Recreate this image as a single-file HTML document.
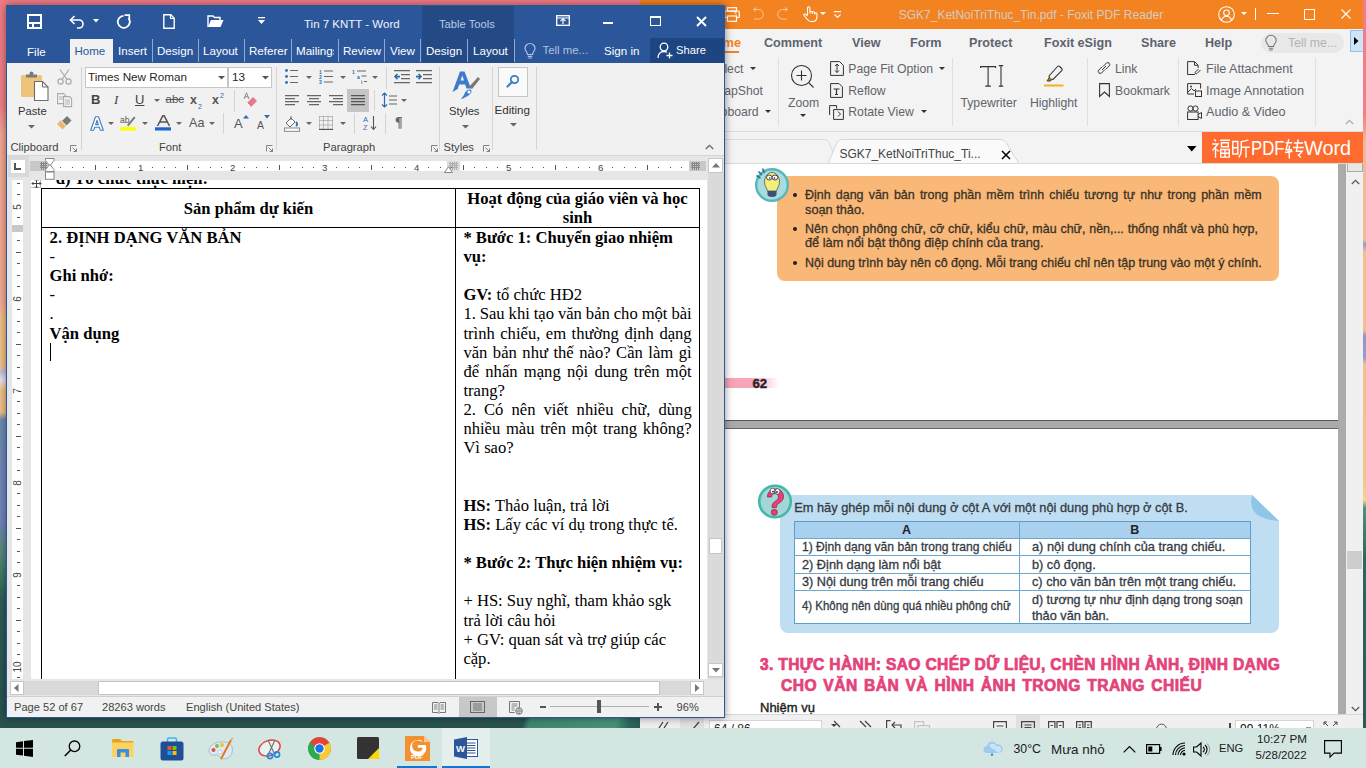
<!DOCTYPE html>
<html><head><meta charset="utf-8">
<style>
*{margin:0;padding:0;box-sizing:border-box}
html,body{width:1366px;height:768px;overflow:hidden;position:relative;font-family:"Liberation Sans",sans-serif}
.a{position:absolute}
svg{position:absolute;overflow:visible}
.t{position:absolute;white-space:nowrap;line-height:1}
/* wallpaper */
#wall{left:0;top:0;width:1366px;height:728px;background:linear-gradient(180deg,#f27c86 0px,#f07f86 105px,#f5a892 135px,#f6aa94 300px,#f2c08a 318px,#f2c388 365px,#c9c0dc 372px,#e8e4ee 380px,#f0c48a 390px,#efc088 412px,#6c8cb4 420px,#7484bc 520px,#5a8a80 550px,#3e7a68 575px,#2c5e56 600px,#28524e 728px)}
/* taskbar */
#task{left:0;top:728px;width:1366px;height:40px;background:#d3e6e2}
.tt{font-size:12px;color:#1a1a1a}
/* foxit */
#fox{left:640px;top:0;width:723px;height:728px;background:#f3f3f3;overflow:hidden}
.ftab{font-weight:bold;font-size:12.6px;color:#5d6370;margin-top:1px}
.frt{font-size:12.2px;color:#60646c}
/* word */
#word{left:6px;top:5px;width:719px;height:713px;background:#f1f1f1;box-shadow:0 0 8px rgba(0,0,0,.45);overflow:hidden}
.wtab{font-size:11.6px;color:#fff}
.sep{background:#d4d4d4;width:1px}
.doc{font-family:"Liberation Serif",serif;font-size:16.6px;color:#000;line-height:1}
</style></head><body>
<div id="wall" class="a"></div>
<div class="a" style="left:1360px;top:0;width:6px;height:728px;background:linear-gradient(180deg,#f27c88 0,#f07f88 115px,#f1b898 140px,#f2bc92 240px,#9a98cc 244px,#f0c08e 252px,#f0c08e 330px,#9494c8 336px,#9a9ad0 358px,#f0c08e 364px,#f2c490 480px,#f0d890 500px,#4e9080 508px,#3f7f70 530px,#2e6660 560px,#2a5a55 728px)"></div>

<div class="a" style="left:515px;top:716px;width:125px;height:12px;background:linear-gradient(110deg,rgba(0,0,0,0) 0,rgba(0,0,0,0) 10px,#3f876e 16px,#4a9178 80%,#2d6a5c 90%,#2a5a55 100%)"></div>
<!-- ============ FOXIT ============ -->
<div id="fox" class="a">
 <div class="a" style="left:0px;top:0;width:723px;height:29px;background:#f38221"></div>
 <!-- title icons -->
 <svg style="left:84.0px;top:7px" width="16" height="15" viewBox="0 0 16 15"><rect x="3.5" y=".7" width="9" height="3.5" fill="none" stroke="#fff" stroke-width="1.2"/><rect x=".7" y="4" width="14.6" height="6.5" rx="1" fill="none" stroke="#fff" stroke-width="1.2"/><rect x="3.5" y="9" width="9" height="5.3" fill="#f38221" stroke="#fff" stroke-width="1.2"/><path d="M10.5 6h2" stroke="#fff" stroke-width="1"/></svg>
 <svg style="left:111.0px;top:7px" width="13" height="14" viewBox="0 0 13 14"><path d="M3 2.5h4.5a4.8 4.8 0 0 1 0 9.6H3" fill="none" stroke="#f9c59a" stroke-width="1"/><path d="M5 .5L2.5 2.5 5 4.5" fill="none" stroke="#f9c59a" stroke-width="1"/></svg>
 <svg style="left:137.0px;top:7px" width="13" height="14" viewBox="0 0 13 14"><path d="M10 2.5H5.5a4.8 4.8 0 0 0 0 9.6H10" fill="none" stroke="#f9c59a" stroke-width="1"/><path d="M8 .5l2.5 2 -2.5 2" fill="none" stroke="#f9c59a" stroke-width="1"/></svg>
 <svg style="left:163.0px;top:6px" width="14" height="16" viewBox="0 0 14 16"><path d="M4.5 9V2a1.2 1.2 0 0 1 2.4 0v5.5M6.9 6.5a1.2 1.2 0 0 1 2.4 0V8M9.3 7a1.2 1.2 0 0 1 2.4 0v1.5M11.7 8a1.1 1.1 0 0 1 2.2 0v3c0 2.5-1.5 4.5-4.5 4.5H8c-2 0-3-1-4-2.5L1 9.5c-.5-1 .5-2 1.5-1.2L4.5 10" fill="none" stroke="#fff" stroke-width="1.1"/></svg>
 <svg style="left:180.0px;top:12px" width="6" height="4"><path d="M0 0h6L3 3z" fill="#fff"/></svg>
 <svg style="left:193.5px;top:11px" width="7" height="9"><rect x="0" y="0" width="7" height="1.2" fill="#fff"/><path d="M0 3.5h7M0 5.5h7" stroke="#fff" stroke-width="0"/><path d="M.5 3.5l3 3 3-3" fill="none" stroke="#fff" stroke-width="1.1"/><path d="M.5 6l3 3 3-3" fill="none" stroke="#fff" stroke-width="0"/></svg>
 <div class="t" style="left:258.7px;top:9px;font-size:12px;color:#d6cbc2">SGK7_KetNoiTriThuc_Tin.pdf - Foxit PDF Reader</div>
 <svg style="left:577.5px;top:5.5px" width="17" height="17" viewBox="0 0 17 17"><circle cx="8.5" cy="8.5" r="7.8" fill="none" stroke="#fff" stroke-width="1.1"/><circle cx="8.5" cy="6.8" r="2.8" fill="none" stroke="#fff" stroke-width="1.1"/><path d="M3.5 14c1-2.5 3-3.8 5-3.8s4 1.3 5 3.8" fill="none" stroke="#fff" stroke-width="1.1"/></svg>
 <svg style="left:601.0px;top:12px" width="6" height="4"><path d="M0 0h6L3 3z" fill="#fff"/></svg>
 <div class="a" style="left:614.5px;top:8px;width:1px;height:12px;background:#fff"></div>
 <div class="a" style="left:627.0px;top:13px;width:12px;height:1px;background:#fff"></div>
 <div class="a" style="left:664.0px;top:9px;width:10.5px;height:10.5px;border:1.1px solid #fff"></div>
 <svg style="left:701.0px;top:8.5px" width="10" height="10" viewBox="0 0 10 10"><path d="M.5.5l9 9M9.5.5l-9 9" stroke="#fff" stroke-width="1.1"/></svg>
 <!-- ribbon tabs -->
 <div class="a" style="left:0px;top:29px;width:723px;height:102.5px;background:#f3f3f3"></div>
 <div class="t ftab" style="left:66.0px;top:36px;color:#f38221">Home</div>
 <div class="a" style="left:63.0px;top:50.5px;width:36px;height:2.3px;background:#f38221"></div>
 <div class="t ftab" style="left:124.0px;top:36px">Comment</div>
 <div class="t ftab" style="left:212.0px;top:36px">View</div>
 <div class="t ftab" style="left:270.0px;top:36px">Form</div>
 <div class="t ftab" style="left:329.0px;top:36px">Protect</div>
 <div class="t ftab" style="left:404.0px;top:36px">Foxit eSign</div>
 <div class="t ftab" style="left:501.0px;top:36px">Share</div>
 <div class="t ftab" style="left:565.0px;top:36px">Help</div>
 <div class="a" style="left:621.0px;top:32.5px;width:83px;height:20.2px;border-radius:10px;background:#e8e8e8"></div>
 <svg style="left:625.0px;top:35px" width="12" height="16" viewBox="0 0 12 16"><path d="M3.5 11.5C3.5 9 .8 8 .8 5.5a5.2 5.2 0 0 1 10.4 0C11.2 8 8.5 9 8.5 11.5z" fill="none" stroke="#777" stroke-width="1.1"/><path d="M3.8 13.3h4.4M4.3 15h3.4" stroke="#777" stroke-width="1.1"/></svg>
 <div class="t" style="left:648.0px;top:36.5px;font-size:12.3px;color:#b3b3b3">Tell me...</div>
 <div class="a" style="left:710.0px;top:30px;width:13px;height:21.5px;background:#cde5f8;border:1px solid #8fc3ec;border-right:0"></div>
 <svg style="left:714.0px;top:36.5px" width="5" height="8"><path d="M0 0v8l4.5-4z" fill="#000"/></svg>
 <!-- ribbon -->
 <div class="t frt" style="left:69.5px;top:62.5px">Select</div>
 <svg style="left:110.0px;top:66.5px" width="6" height="4"><path d="M0 0h6L3 3z" fill="#333"/></svg>
 <div class="t frt" style="left:69.4px;top:84.5px">SnapShot</div>
 <div class="t frt" style="left:66.4px;top:106px">Clipboard</div>
 <svg style="left:124.5px;top:110px" width="6" height="4"><path d="M0 0h6L3 3z" fill="#333"/></svg>
 <div class="a" style="left:137.5px;top:58px;width:1px;height:68px;background:#e0e0e0"></div>
 <svg style="left:151.0px;top:64.5px" width="24" height="24" viewBox="0 0 24 24"><circle cx="10.5" cy="10.5" r="10" fill="none" stroke="#333" stroke-width="1.1"/><path d="M10.5 5.5v10M5.5 10.5h10M18 18l4.5 4.5" stroke="#333" stroke-width="1.1"/></svg>
 <div class="t frt" style="left:148.0px;top:96.5px">Zoom</div>
 <svg style="left:159.5px;top:114px" width="6" height="4"><path d="M0 0h6L3 3z" fill="#333"/></svg>
 <svg style="left:189.5px;top:60.5px" width="14" height="15" viewBox="0 0 14 15"><path d="M.6.6h9l3.8 3.8v10H.6z" fill="none" stroke="#333" stroke-width="1"/><path d="M7 3v8.5M5 5l2-2 2 2M5 9.5l2 2 2-2" fill="none" stroke="#333" stroke-width="1"/></svg>
 <div class="t frt" style="left:208.3px;top:62.5px">Page Fit Option</div>
 <svg style="left:298.5px;top:66.5px" width="6" height="4"><path d="M0 0h6L3 3z" fill="#333"/></svg>
 <svg style="left:190.0px;top:82.5px" width="13" height="15" viewBox="0 0 13 15"><path d="M.6.6h8.5l3.3 3.3v10.5H.6z" fill="none" stroke="#333" stroke-width="1"/><path d="M3.5 6h6M6.5 6v5.5M5 11.5h3" stroke="#333" stroke-width="1.2"/></svg>
 <div class="t frt" style="left:208.3px;top:84.5px">Reflow</div>
 <svg style="left:189.0px;top:104.5px" width="15" height="15" viewBox="0 0 15 15"><path d="M.6 10V.6h7v3" fill="none" stroke="#333" stroke-width="1"/><path d="M4.6 4.6h9.8v9.8H4.6z" fill="none" stroke="#333" stroke-width="1"/><path d="M9 6.5l2.5 2.5-2.5 2.5" fill="none" stroke="#333" stroke-width="1"/></svg>
 <div class="t frt" style="left:208.3px;top:106px">Rotate View</div>
 <svg style="left:281.0px;top:110px" width="6" height="4"><path d="M0 0h6L3 3z" fill="#333"/></svg>
 <div class="a" style="left:311.5px;top:58px;width:1px;height:68px;background:#e0e0e0"></div>
 <svg style="left:340px;top:65px" width="24" height="23" viewBox="0 0 24 23" fill="none" stroke="#333" stroke-width="1.1"><path d="M.6 3V1.6h15V3M8.1 1.6v19.5M5.3 21.1h5.6M21 .6v20.5M18.8.6h4.4M18.8 21.1h4.4"/></svg>
 <div class="t frt" style="left:320.5px;top:96.5px">Typewriter</div>
 <svg style="left:404.0px;top:65px" width="20" height="23" viewBox="0 0 20 23"><path d="M5 11L13.5 1.5a1.5 1.5 0 0 1 2.2 0l2 2a1.5 1.5 0 0 1 0 2.2L9 14.5l-3-.2z" fill="none" stroke="#333" stroke-width="1.1"/><path d="M5.5 12l-2.5 4 3 .2 2.5-2" fill="#a0782a" stroke="#333" stroke-width=".8"/><rect x="0" y="19.5" width="19.5" height="2" fill="#f7b11e"/></svg>
 <div class="t frt" style="left:390.0px;top:96.5px">Highlight</div>
 <div class="a" style="left:446.5px;top:58px;width:1px;height:68px;background:#e0e0e0"></div>
 <svg style="left:458.0px;top:62px" width="12" height="12" viewBox="0 0 12 12"><path d="M5 4.5l1.5-1.5 2 -2a2 2 0 0 1 2.8 2.8l-2 2-1.5 1.5M7 7.5L5.5 9l-2 2A2 2 0 0 1 .7 8.2l2-2L4.2 4.7M4 8l4-4" fill="none" stroke="#333" stroke-width="1"/></svg>
 <div class="t frt" style="left:475.0px;top:62.5px">Link</div>
 <svg style="left:458.5px;top:83px" width="11" height="14" viewBox="0 0 11 14"><path d="M.6.6h9.8v12.8L5.5 9 .6 13.4z" fill="none" stroke="#333" stroke-width="1.1"/></svg>
 <div class="t frt" style="left:475.0px;top:84.5px">Bookmark</div>
 <div class="a" style="left:537.5px;top:58px;width:1px;height:68px;background:#e0e0e0"></div>
 <svg style="left:547.0px;top:61px" width="15" height="15" viewBox="0 0 15 15"><path d="M8 13.5H.6V.6h7l3.5 3.5V7" fill="none" stroke="#333" stroke-width="1"/><path d="M7.5 .8v3.5H11" fill="none" stroke="#333" stroke-width="1"/><path d="M13.5 9l-3.5 3.5a1 1 0 0 1-1.5-1.5l3-3" fill="none" stroke="#333" stroke-width="1"/></svg>
 <div class="t frt" style="left:566.0px;top:62.5px;font-size:12.6px">File Attachment</div>
 <svg style="left:547.0px;top:83px" width="15" height="15" viewBox="0 0 15 15"><path d="M7 11H.6V.6h13v5" fill="none" stroke="#333" stroke-width="1"/><path d="M1 9l3.5-3.5L7 8l2-2" fill="none" stroke="#333" stroke-width="1"/><circle cx="4" cy="3.5" r="1" fill="#333"/><rect x="8.5" y="8" width="6" height="5.5" fill="#f3f3f3" stroke="#333" stroke-width="1"/></svg>
 <div class="t frt" style="left:566.0px;top:84.5px;font-size:12.6px">Image Annotation</div>
 <svg style="left:547.0px;top:104.5px" width="15" height="15" viewBox="0 0 15 15"><circle cx="3.5" cy="3.5" r="2.6" fill="none" stroke="#333" stroke-width="1"/><circle cx="8.5" cy="3.5" r="2.6" fill="none" stroke="#333" stroke-width="1"/><rect x=".6" y="7" width="10.5" height="7.5" fill="none" stroke="#333" stroke-width="1"/><path d="M11 9.5l3.5-2v6l-3.5-2" fill="none" stroke="#333" stroke-width="1"/></svg>
 <div class="t frt" style="left:566.0px;top:106px;font-size:12.6px">Audio &amp; Video</div>
 <div class="a" style="left:674.5px;top:58px;width:1px;height:68px;background:#e0e0e0"></div>
 <svg style="left:705.0px;top:119px" width="9" height="6" viewBox="0 0 9 6"><path d="M.8 5l3.7-3.7L8.2 5" fill="none" stroke="#aaa" stroke-width="1.2"/></svg>
 <div class="a" style="left:0px;top:131px;width:723px;height:1px;background:#dcdcdc"></div>
 <!-- tab bar -->
 <div class="a" style="left:0px;top:132px;width:723px;height:31.5px;background:#f3f3f3"></div>
 <svg style="left:0.0px;top:139px" width="400" height="25" viewBox="0 0 400 25"><path d="M0 .5H184a6 6 0 0 1 5 3L198 24.5" fill="none" stroke="#dcdcdc" stroke-width="1"/><path d="M188 24.5L197 3.5a6 6 0 0 1 5-3h159a6 6 0 0 1 5 3l13 21z" fill="#fafafa" stroke="#d6d6d6" stroke-width="1"/></svg>
 <div class="t" style="left:199.4px;top:147.5px;font-size:12px;color:#444">SGK7_KetNoiTriThuc_Ti...</div>
 <svg style="left:361.0px;top:149.5px" width="10" height="10" viewBox="0 0 10 10"><path d="M1 1l8 8M9 1L1 9" stroke="#000" stroke-width="1.5"/></svg>
 <svg style="left:546.5px;top:146px" width="10" height="6"><path d="M0 0h9.5L4.75 5.5z" fill="#000"/></svg>
 <div class="a" style="left:562.0px;top:131.7px;width:161px;height:31.5px;background:#ff6a2e"></div>
 <svg style="left:572px;top:139px" width="19" height="19" viewBox="0 0 19 19" fill="none" stroke="#fff" stroke-width="1.4"><path d="M2 .3l2 2M0 5h6L.5 11.5M3.5 8.5V18.8M4.5 10.5l2.3 2M8 1.2h10M9.5 3.8h6.8v4H9.5zM8.7 10.5h8.6v7.6H8.7zM13 10.5v7.6M8.7 14.3h8.6"/></svg>
 <svg style="left:592px;top:139px" width="19" height="19" viewBox="0 0 19 19" fill="none" stroke="#fff" stroke-width="1.4"><path d="M.8 2.5h5v12.5h-5zM.8 8.7h5M16.5.8C14 1.6 11.5 2.3 9.3 2.6V10c0 3-.6 6-2.5 8.5M9.3 8.2h8.5M14 8.2v10.5"/></svg>
 <div class="t" style="left:610.5px;top:138.5px;font-size:19.5px;color:#fff;transform:scaleX(.86);transform-origin:0 0">PDF</div>
 <svg style="left:645.3px;top:139px" width="19" height="20" viewBox="0 0 19 20" fill="none" stroke="#fff" stroke-width="1.4"><path d="M.5 3.8h6.5M3.8.3L1 10.8h6M4.3 6.5v13M0 13.5l7.5-1.3M8.8 4h9.4M8 8.5h10.8M13.2 .3l-1.8 12h5.8l-3.5 4.2M12.8 15.5l3 3"/></svg>
 <div class="t" style="left:664.3px;top:138.5px;font-size:19.5px;color:#fff;transform:scaleX(1.02);transform-origin:0 0">Word</div>
 <div class="a" style="left:0px;top:163px;width:723px;height:1px;background:#dadada"></div>
 <!-- doc area -->
 <div class="a" style="left:0px;top:164px;width:698px;height:550px;background:#fff;overflow:hidden">
 <div class="a" style="left:137.0px;top:12.0px;width:502px;height:105px;border-radius:8px;background:#f9b878"></div>
 <svg style="left:114.0px;top:2.0px" width="36" height="36" viewBox="0 0 36 36"><circle cx="18" cy="19" r="15.8" fill="#a9dcdf" stroke="#55b6bd" stroke-width="2.4"/><path d="M10.5 16c0-5.5 3.3-9.5 7.5-9.5s7.5 4 7.5 9.5c0 4-2.5 6-3 9h-9c-.5-3-3-5-3-9z" fill="#f4ef7a" stroke="#555" stroke-width=".8"/><path d="M13.5 25h9v3.5c0 1.5-1.5 2.5-4.5 2.5s-4.5-1-4.5-2.5z" fill="#3d4f78"/><ellipse cx="15.3" cy="11.5" rx="2.8" ry="2.5" fill="#fff" stroke="#333" stroke-width=".9"/><ellipse cx="21" cy="11.5" rx="2.8" ry="2.5" fill="#fff" stroke="#333" stroke-width=".9"/><circle cx="15.8" cy="12" r=".8" fill="#222"/><circle cx="20.5" cy="12" r=".8" fill="#222"/><path d="M2.5 9.5l4 2.5M4.5 5.5l3.5 3.5M8.5 2.5l2 4.5" stroke="#2d6f95" stroke-width="1.6"/></svg>
 <div class="t" style="left:165.0px;top:24.8px;font-size:12.46px;color:#3a3226;-webkit-text-stroke:.3px #3a3226;word-spacing:1.723px;">Định dạng văn bản trong phần mềm trình chiếu tương tự như trong phần mềm</div>
 <div class="a" style="left:152.5px;top:28.9px;width:4.5px;height:4.5px;border-radius:50%;background:#222"></div>
 <div class="t" style="left:165.0px;top:40.1px;font-size:12.46px;color:#3a3226;-webkit-text-stroke:.3px #3a3226;transform:scaleX(1.025);transform-origin:0 0">soạn thảo.</div>
 <div class="t" style="left:165.0px;top:58.7px;font-size:12.46px;color:#3a3226;-webkit-text-stroke:.3px #3a3226;word-spacing:0.388px;">Nên chọn phông chữ, cỡ chữ, kiểu chữ, màu chữ, nền,...  thống nhất và phù hợp,</div>
 <div class="a" style="left:152.5px;top:62.8px;width:4.5px;height:4.5px;border-radius:50%;background:#222"></div>
 <div class="t" style="left:165.0px;top:73.1px;font-size:12.46px;color:#3a3226;-webkit-text-stroke:.3px #3a3226;transform:scaleX(1.025);transform-origin:0 0">để làm nổi bật thông điệp chính của trang.</div>
 <div class="t" style="left:165.0px;top:92.6px;font-size:12.46px;color:#3a3226;-webkit-text-stroke:.3px #3a3226;word-spacing:-0.010px;">Nội dung trình bày nên cô đọng. Mỗi trang chiếu chỉ nên tập trung vào một ý chính.</div>
 <div class="a" style="left:152.5px;top:96.7px;width:4.5px;height:4.5px;border-radius:50%;background:#222"></div>
 <div class="a" style="left:85.0px;top:213.5px;width:54px;height:10.5px;background:linear-gradient(90deg,#f7a6b8 0,#f7a6b8 50%,rgba(247,166,184,0) 100%)"></div>
 <div class="t" style="left:112.5px;top:213.3px;font-size:13.2px;font-weight:bold;color:#2a1f24;-webkit-text-stroke:.4px #2a1f24">62</div>
 <div class="a" style="left:0;top:256.0px;width:698px;height:9px;background:#ababab;border-top:1px solid #555;border-bottom:1px solid #666"></div>
 <svg style="left:140.0px;top:330.5px" width="500" height="138" viewBox="0 0 500 138"><path d="M8 0H472L499 26V130a8 8 0 0 1-8 8H8a8 8 0 0 1-8-8V8A8 8 0 0 1 8 0z" fill="#bfdef2"/><path d="M472 0c-3 14 2 24 27 26z" fill="#8fc5e6"/></svg>
 <svg style="left:116.5px;top:319.5px" width="36" height="36" viewBox="0 0 36 36"><circle cx="18" cy="17.5" r="15.8" fill="#a3d6d6" stroke="#3fb9aa" stroke-width="2.6"/><path d="M10.5 13c0-5 3.5-8 8-8s8 3 8 7.5c0 4-3 5.5-5 7-1.5 1-2 2-2 4h-4.5c0-3 .8-4.5 3-6 2-1.5 3.5-2.5 3.5-4.5 0-2-1.5-3.5-3.5-3.5s-3.5 1.5-3.5 3.5z" fill="#ec3f78" stroke="#7a1f44" stroke-width=".7"/><circle cx="17.3" cy="28.3" r="3" fill="#ec3f78" stroke="#7a1f44" stroke-width=".7"/><ellipse cx="15.5" cy="7" rx="2.4" ry="2.8" fill="#fff" stroke="#333" stroke-width=".7"/><ellipse cx="20.5" cy="7.5" rx="2.4" ry="2.8" fill="#fff" stroke="#333" stroke-width=".7"/><circle cx="16" cy="7.6" r=".9" fill="#222"/><circle cx="20" cy="8" r=".9" fill="#222"/></svg>
 <div class="t" style="left:154.2px;top:337.9px;font-size:12.8px;color:#353b44;-webkit-text-stroke:.3px #353b44">Em hãy ghép mỗi nội dung ở cột A với một nội dung phù hợp ở cột B.</div>
 <div class="a" style="left:154.0px;top:357.0px;width:456.5px;height:102.8px;background:#fff;border:1px solid #5d9fc9"></div>
 <div class="a" style="left:155.0px;top:358.0px;width:454.5px;height:16.3px;background:#a9d0ee"></div>
 <div class="a" style="left:154.0px;top:374.3px;width:456.5px;height:1px;background:#6aa8d0"></div>
 <div class="a" style="left:154.0px;top:391.4px;width:456.5px;height:1px;background:#6aa8d0"></div>
 <div class="a" style="left:154.0px;top:409.0px;width:456.5px;height:1px;background:#6aa8d0"></div>
 <div class="a" style="left:154.0px;top:426.4px;width:456.5px;height:1px;background:#6aa8d0"></div>
 <div class="a" style="left:379.0px;top:357.0px;width:1px;height:102.8px;background:#6aa8d0"></div>
 <div class="t" style="left:154.0px;top:359.9px;width:225px;text-align:center;font-size:12.5px;font-weight:bold;color:#222">A</div>
 <div class="t" style="left:379.0px;top:359.9px;width:231.5px;text-align:center;font-size:12.5px;font-weight:bold;color:#222">B</div>
 <div class="t" style="left:161.7px;top:376.9px;font-size:12.13px;color:#353b44;-webkit-text-stroke:.3px #353b44;transform:scaleX(0.997);transform-origin:0 0">1) Định dạng văn bản trong trang chiếu</div>
 <div class="t" style="left:161.7px;top:394.6px;font-size:12.13px;color:#353b44;-webkit-text-stroke:.3px #353b44;transform:scaleX(1.051);transform-origin:0 0">2) Định dạng làm nổi bật</div>
 <div class="t" style="left:161.7px;top:412.2px;font-size:12.13px;color:#353b44;-webkit-text-stroke:.3px #353b44;transform:scaleX(1.048);transform-origin:0 0">3) Nội dung trên mỗi trang chiếu</div>
 <div class="t" style="left:161.7px;top:436.2px;font-size:12.13px;color:#353b44;-webkit-text-stroke:.3px #353b44;transform:scaleX(0.943);transform-origin:0 0">4) Không nên dùng quá nhiều phông chữ</div>
 <div class="t" style="left:392.0px;top:376.9px;font-size:12.13px;color:#353b44;-webkit-text-stroke:.3px #353b44;transform:scaleX(1.054);transform-origin:0 0">a) nội dung chính của trang chiếu.</div>
 <div class="t" style="left:392.0px;top:394.6px;font-size:12.13px;color:#353b44;-webkit-text-stroke:.3px #353b44;transform:scaleX(1.050);transform-origin:0 0">b) cô đọng.</div>
 <div class="t" style="left:392.0px;top:412.2px;font-size:12.13px;color:#353b44;-webkit-text-stroke:.3px #353b44;transform:scaleX(1.051);transform-origin:0 0">c) cho văn bản trên một trang chiếu.</div>
 <div class="t" style="left:392.0px;top:429.5px;font-size:12.13px;color:#353b44;-webkit-text-stroke:.3px #353b44;transform:scaleX(1.032);transform-origin:0 0">d) tương tự như định dạng trong soạn</div>
 <div class="t" style="left:392.0px;top:445.8px;font-size:12.13px;color:#353b44;-webkit-text-stroke:.3px #353b44;transform:scaleX(1.050);transform-origin:0 0">thảo văn bản.</div>
 <div class="t" style="left:120.0px;top:492.8px;font-size:15.6px;font-weight:bold;color:#e4437a;-webkit-text-stroke:.7px #e4437a;letter-spacing:.34px">3. THỰC HÀNH: SAO CHÉP DỮ LIỆU, CHÈN HÌNH ẢNH, ĐỊNH DẠNG</div>
 <div class="t" style="left:141.0px;top:513.8px;font-size:15.6px;font-weight:bold;color:#e4437a;-webkit-text-stroke:.7px #e4437a;letter-spacing:.47px;word-spacing:1.5px">CHO VĂN BẢN VÀ HÌNH ẢNH TRONG TRANG CHIẾU</div>
 <div class="t" style="left:120.0px;top:537.0px;font-size:13px;font-weight:normal;color:#231f20;-webkit-text-stroke:.4px #231f20">Nhiệm vụ</div>
 </div>
 <div class="a" style="left:698.0px;top:164px;width:8px;height:550px;background:#ababab"></div>
 <div class="a" style="left:706.0px;top:164px;width:17px;height:550px;background:#f0f0f0"></div>
 <div class="a" style="left:706.5px;top:164px;width:16px;height:8px;background:#e8e8e8;border:1px solid #aaa;border-top:0"></div>
 <svg style="left:711.0px;top:179px" width="9" height="6" viewBox="0 0 9 6"><path d="M.8 5l3.7-3.7L8.2 5" fill="none" stroke="#555" stroke-width="1.2"/></svg>
 <div class="a" style="left:706.5px;top:551px;width:15px;height:18px;background:#cdcdcd"></div>
 <svg style="left:711.0px;top:706px" width="9" height="6" viewBox="0 0 9 6"><path d="M.8 1l3.7 3.7L8.2 1" fill="none" stroke="#555" stroke-width="1.2"/></svg>
 <!-- status bar -->
 <div class="a" style="left:0px;top:714px;width:723px;height:1px;background:#d8d8d8"></div>
 <div class="a" style="left:0px;top:715px;width:723px;height:13px;background:#f0f0f0"></div>
 <svg style="left:19.0px;top:722px" width="12" height="8" viewBox="0 0 12 8"><path d="M4 0L0 6M9 0L5 6" stroke="#444" stroke-width="1.3"/></svg>
 <div class="a" style="left:40.0px;top:715px;width:23.6px;height:13px;background:#e2e2e2"></div>
 <svg style="left:50.0px;top:722px" width="10" height="8" viewBox="0 0 10 8"><path d="M9 0L3 7" stroke="#444" stroke-width="1.3"/></svg>
 <div class="a" style="left:68.5px;top:719.5px;width:113.7px;height:12px;background:#fff;border:1px solid #d5d5d5"></div>
 <div class="t" style="left:74.0px;top:723px;font-size:12px;color:#222">64 / 86</div>
 <svg style="left:191.0px;top:724px" width="6" height="4"><path d="M0 0h6L3 3z" fill="#444"/></svg>
 <svg style="left:194.0px;top:721px" width="8" height="8" viewBox="0 0 8 8"><path d="M0 0l6 6" stroke="#444" stroke-width="1.3"/></svg>
 <svg style="left:220.0px;top:721px" width="12" height="8" viewBox="0 0 12 8"><path d="M0 0l6 6M5 0l6 6" stroke="#444" stroke-width="1.3"/></svg>
 <svg style="left:246.0px;top:720px" width="16" height="10" viewBox="0 0 16 10"><path d="M.6 10V.6h4M15 10V5H6" fill="none" stroke="#444" stroke-width="1.2"/><path d="M9 2L6 5l3 3" fill="none" stroke="#444" stroke-width="1.2"/></svg>
 <svg style="left:274.0px;top:721px" width="16" height="10" viewBox="0 0 16 10"><path d="M.6 10V.6h9v4M4 10V4.6h11.5V10" fill="none" stroke="#c4c4c4" stroke-width="1.2"/></svg>
 <svg style="left:353.0px;top:720.5px" width="14" height="9" viewBox="0 0 14 9"><path d="M.6 9V.6h12.8V9M3.5 5h7" fill="none" stroke="#444" stroke-width="1.2"/></svg>
 <div class="a" style="left:375.5px;top:715px;width:24.5px;height:13px;background:#e0e0e0"></div>
 <svg style="left:381.0px;top:720.5px" width="14" height="9" viewBox="0 0 14 9"><path d="M.6 9V.6h12.8V9M3.5 4h7M3.5 6.5h7" fill="none" stroke="#444" stroke-width="1.2"/></svg>
 <svg style="left:408.0px;top:720.5px" width="16" height="9" viewBox="0 0 16 9"><path d="M.6 9V.6h6.3V9M9 9V.6h6.3V9M2.5 4.5h2.5M11 4.5h2.5" fill="none" stroke="#444" stroke-width="1.2"/></svg>
 <svg style="left:436.0px;top:720.5px" width="16" height="9" viewBox="0 0 16 9"><path d="M.6 9V.6h6.3V9M9 9V.6h6.3V9M2.5 4h2.5M11 4h2.5M2.5 6.5h2.5M11 6.5h2.5" fill="none" stroke="#444" stroke-width="1.2"/></svg>
 <svg style="left:516.0px;top:722.5px" width="11" height="6" viewBox="0 0 11 6"><path d="M.6 6A4.9 4.9 0 0 1 10.4 6" fill="#f0f0f0" stroke="#555" stroke-width="1"/></svg>
 <div class="a" style="left:589.2px;top:723px;width:1.5px;height:5px;background:#444"></div>
 <div class="a" style="left:595.0px;top:719.8px;width:79px;height:12px;background:#fff;border:1px solid #d5d5d5"></div>
 <div class="t" style="left:600.0px;top:723px;font-size:12px;color:#111">99.11%</div>
 <div class="a" style="left:666.0px;top:727px;width:5px;height:1px;background:#999"></div>
 <svg style="left:683.0px;top:721px" width="15" height="8" viewBox="0 0 15 8"><path d="M1 1l4 4M1 1v3M1 1h3M14 1l-4 4M14 1v3M14 1h-3" fill="none" stroke="#444" stroke-width="1"/></svg>
</div>

<!-- ============ WORD ============ -->
<div id="word" class="a">
 <!-- title bar -->
 <div class="a" style="left:0;top:0;width:719px;height:58px;background:#2b579a"></div>
 <div class="a" style="left:416px;top:1px;width:92px;height:57px;background:#244a86"></div>
 <div class="a" style="left:644px;top:33px;width:75px;height:25px;background:#1c4581"></div>
 <!-- save -->
 <svg style="left:21px;top:9px" width="15" height="15" viewBox="0 0 15 15"><rect x="1" y="1" width="13" height="13" fill="none" stroke="#fff" stroke-width="2"/><rect x="1" y="8" width="13" height="2" fill="#fff"/><rect x="5" y="10" width="2" height="4" fill="#fff"/></svg>
 <!-- undo -->
 <svg style="left:63px;top:9px" width="16" height="15" viewBox="0 0 16 15"><path d="M2 6h8a4 4 0 0 1 0 8H8" fill="none" stroke="#fff" stroke-width="1.6"/><path d="M5.5 2L1.5 6l4 4" fill="none" stroke="#fff" stroke-width="1.6"/></svg>
 <svg style="left:87px;top:14px" width="6" height="4"><path d="M0 0h6L3 3.5z" fill="#fff"/></svg>
 <!-- repeat -->
 <svg style="left:110px;top:9px" width="15" height="15" viewBox="0 0 15 15"><path d="M12.6 4.2A6 6 0 1 1 7.5 1.8" fill="none" stroke="#fff" stroke-width="1.8"/><path d="M8.5 1.2h4.8V6" fill="none" stroke="#fff" stroke-width="1.7"/></svg>
 <!-- new -->
 <svg style="left:157px;top:9px" width="12" height="15" viewBox="0 0 12 15"><path d="M.8.8h7l3.4 3.4v10H.8z" fill="none" stroke="#fff" stroke-width="1.4"/><path d="M7.5 1v3.5h3.5" fill="none" stroke="#fff" stroke-width="1.2"/></svg>
 <!-- open -->
 <svg style="left:201px;top:9px" width="17" height="14" viewBox="0 0 17 14"><path d="M1 13V2h5l1.5 1.5H13V6" fill="none" stroke="#fff" stroke-width="1.4"/><path d="M1 13l3-7h12.5l-3 7z" fill="#fff"/></svg>
 <!-- customize -->
 <svg style="left:252px;top:12px" width="7" height="9"><rect x="0" y="0" width="7" height="1.3" fill="#fff"/><path d="M0 3h7L3.5 7z" fill="#fff"/></svg>
 <div class="t" style="left:298px;top:13.5px;font-size:11.5px;color:#f0f4fa">Tin 7 KNTT - Word</div>
 <div class="t" style="left:433px;top:14px;font-size:11.2px;color:#b9cbe6">Table Tools</div>
 <!-- ribbon display options -->
 <svg style="left:550px;top:10px" width="14" height="11" viewBox="0 0 14 11"><rect x=".7" y=".7" width="12.6" height="9.6" fill="none" stroke="#fff" stroke-width="1.3"/><path d="M7 9V4M4.5 6.2L7 3.7l2.5 2.5" fill="none" stroke="#fff" stroke-width="1.2"/><rect x=".7" y="2.5" width="12.6" height="1" fill="#fff"/></svg>

 <div class="a" style="left:597px;top:17px;width:10px;height:2px;background:#fff"></div>
 <div class="a" style="left:643.5px;top:11px;width:11px;height:10px;border:1.3px solid #fff;border-top-width:2.3px"></div>
 <svg style="left:689.5px;top:10.5px" width="11" height="11" viewBox="0 0 11 11"><path d="M1 1l9 9M10 1L1 10" stroke="#fff" stroke-width="1.9"/></svg>
 <!-- tabs -->
 <div class="a" style="left:64px;top:33.8px;width:42.6px;height:24.2px;background:#f1f1f1"></div>
 <div class="t wtab" style="margin-top:1px;left:21px;top:40px">File</div>
 <div class="t wtab" style="margin-top:1px;left:68.4px;top:39px;color:#2b579a">Home</div>
 <div class="t wtab" style="margin-top:1px;left:112px;top:39px">Insert</div>
 <div class="t wtab" style="margin-top:1px;left:151px;top:39px">Design</div>
 <div class="t wtab" style="margin-top:1px;left:197px;top:39px">Layout</div>
 <div class="t wtab" style="margin-top:1px;left:243px;top:39px">Referer</div>
 <div class="a" style="left:290px;top:33px;width:38px;height:25px;overflow:hidden"><div class="t wtab" style="margin-top:1px;left:0;top:6px">Mailings</div></div>
 <div class="t wtab" style="margin-top:1px;left:337px;top:39px">Review</div>
 <div class="t wtab" style="margin-top:1px;left:384px;top:39px">View</div>
 <div class="t wtab" style="margin-top:1px;left:420px;top:39px">Design</div>
 <div class="t wtab" style="margin-top:1px;left:467px;top:39px">Layout</div>
 <div class="a" style="left:146px;top:34px;width:1px;height:23px;background:#8fa9cf"></div>
 <div class="a" style="left:192px;top:34px;width:1px;height:23px;background:#8fa9cf"></div>
 <div class="a" style="left:238px;top:34px;width:1px;height:23px;background:#8fa9cf"></div>
 <div class="a" style="left:285px;top:34px;width:1px;height:23px;background:#8fa9cf"></div>
 <div class="a" style="left:332px;top:34px;width:1px;height:23px;background:#8fa9cf"></div>
 <div class="a" style="left:378px;top:34px;width:1px;height:23px;background:#8fa9cf"></div>
 <div class="a" style="left:414px;top:34px;width:1px;height:23px;background:#8fa9cf"></div>
 <div class="a" style="left:461px;top:34px;width:1px;height:23px;background:#8fa9cf"></div>
 <div class="a" style="left:508px;top:34px;width:1px;height:23px;background:#8fa9cf"></div>
 <!-- bulb -->
 <svg style="left:518px;top:38px" width="12" height="16" viewBox="0 0 12 16"><path d="M3.5 11.5C3.5 9 1 8 1 5.5a5 5 0 0 1 10 0C11 8 8.5 9 8.5 11.5z" fill="none" stroke="#aec2e2" stroke-width="1.2"/><path d="M3.8 13.3h4.4M4.3 15h3.4" stroke="#aec2e2" stroke-width="1.2"/></svg>
 <div class="t wtab" style="margin-top:1px;left:536.5px;top:39px;color:#aec2e2;font-size:11.4px">Tell me...</div>
 <div class="t wtab" style="margin-top:1px;left:598px;top:39px">Sign in</div>
 <svg style="left:651px;top:37px" width="17" height="17" viewBox="0 0 17 17"><circle cx="7" cy="5" r="3.8" fill="none" stroke="#fff" stroke-width="1.3"/><path d="M1 16c0-4 2.5-6.5 6-6.5 1.2 0 2.2.3 3 .8" fill="none" stroke="#fff" stroke-width="1.3"/><path d="M12.5 10.5v6M9.5 13.5h6" stroke="#fff" stroke-width="1.3"/></svg>
 <div class="t wtab" style="margin-top:1px;left:670px;top:39px;font-size:11.2px">Share</div>
 <!-- ribbon border -->
 <div class="a" style="left:0;top:150px;width:719px;height:1px;background:#d5d5d5"></div>
 <div class="a" style="left:0;top:151px;width:719px;height:562px;background:#e6e6e6"></div>
<!-- ===== Clipboard group ===== -->
 <svg style="left:14px;top:66px" width="30" height="30" viewBox="0 0 30 30"><rect x="1" y="4" width="21" height="22" rx="1.5" fill="#eec37a"/><path d="M6 3.5h11v3H6z" fill="#7a7a7a"/><circle cx="11.5" cy="2.5" r="2" fill="#7a7a7a"/><path d="M14.5 10.5h8l5.5 5.5v13.5H14.5z" fill="#fff" stroke="#6d6d6d" stroke-width="1.1"/><path d="M22.5 10.5v5.5H28" fill="none" stroke="#6d6d6d" stroke-width="1"/></svg>
 <div class="t" style="left:12px;top:101px;font-size:11.2px;color:#333">Paste</div>
 <svg style="left:22px;top:120px" width="7" height="4"><path d="M0 0h7L3.5 3.5z" fill="#666"/></svg>
 <svg style="left:51px;top:64px" width="15" height="16" viewBox="0 0 15 16"><circle cx="3.5" cy="12.5" r="2.6" fill="none" stroke="#a9a9a9" stroke-width="1.2"/><circle cx="11.5" cy="12.5" r="2.6" fill="none" stroke="#a9a9a9" stroke-width="1.2"/><path d="M5 10.5L12 .5M10 10.5L3 .5" stroke="#a9a9a9" stroke-width="1.2"/></svg>
 <svg style="left:51px;top:88px" width="15" height="14" viewBox="0 0 15 14"><path d="M.6.6h6l2 2v8H.6z" fill="#f4f4f4" stroke="#a9a9a9" stroke-width="1.1"/><path d="M6.6 3.6h6l2 2v8h-8z" fill="#f4f4f4" stroke="#a9a9a9" stroke-width="1.1"/><path d="M2 4h4M2 6h4M8 7h5M8 9h5M8 11h5" stroke="#a9a9a9" stroke-width=".9"/></svg>
 <svg style="left:50px;top:110px" width="16" height="16" viewBox="0 0 16 16"><path d="M1 9l5.5 5.5 4-4L5 5z" fill="#e9b86d"/><path d="M6 6l5-5 4.5 4.5-5 5z" fill="#7a7a7a"/><path d="M5.2 5.8l5 5" stroke="#f1f1f1" stroke-width="1"/></svg>
 <div class="t" style="left:4.5px;top:137px;font-size:11.2px;color:#444">Clipboard</div>
 <svg style="left:63.5px;top:139.5px" width="7" height="7" viewBox="0 0 7 7"><path d="M.5 6.5V.5h6" fill="none" stroke="#777" stroke-width=".9"/><path d="M2.5 2.5l4 4M6.5 3.5v3h-3" fill="none" stroke="#777" stroke-width=".9"/></svg>
 <div class="a sep" style="left:75px;top:62px;height:83px"></div>
 <!-- ===== Font group ===== -->
 <div class="a" style="left:79.3px;top:61.8px;width:143px;height:21.5px;background:#fff;border:1px solid #c6c6c6"></div>
 <div class="a" style="left:221.5px;top:61.8px;width:44.3px;height:21.5px;background:#fff;border:1px solid #c6c6c6"></div>
 <div class="t" style="left:82px;top:66px;font-size:11.7px;color:#262626">Times New Roman</div>
 <div class="t" style="left:226px;top:66px;font-size:11.7px;color:#262626">13</div>
 <svg style="left:212px;top:71px" width="7" height="4"><path d="M0 0h7L3.5 3.5z" fill="#555"/></svg>
 <svg style="left:256px;top:71px" width="7" height="4"><path d="M0 0h7L3.5 3.5z" fill="#555"/></svg>
 <div class="t" style="left:85px;top:88px;font-size:13px;font-weight:bold;color:#444">B</div>
 <div class="t" style="left:108px;top:88px;font-size:13px;font-style:italic;font-family:'Liberation Serif',serif;color:#444">I</div>
 <div class="t" style="left:129px;top:88px;font-size:13px;color:#444;text-decoration:underline">U</div>
 <svg style="left:148px;top:94px" width="6" height="4"><path d="M0 0h6L3 3z" fill="#666"/></svg>
 <div class="t" style="left:159.5px;top:89px;font-size:11.5px;color:#555;text-decoration:line-through">abc</div>
 <div class="t" style="left:184px;top:89px;font-size:12.5px;font-weight:bold;color:#555">x</div>
 <div class="t" style="left:192px;top:98px;font-size:7px;color:#2b6cb3">2</div>
 <div class="t" style="left:206px;top:89px;font-size:12.5px;font-weight:bold;color:#555">x</div>
 <div class="t" style="left:214px;top:87px;font-size:7px;color:#2b6cb3">2</div>
 <div class="a sep" style="left:227.5px;top:85px;height:22px"></div>
 <svg style="left:236px;top:87px" width="16" height="16" viewBox="0 0 16 16"><path d="M2 7L4.5 0.8 7 7M3 4.8h3" fill="none" stroke="#888" stroke-width="1"/><path d="M5 11l6-6 4 4-6 6z" fill="#e8788b"/><path d="M5 11l3 3" stroke="#fff" stroke-width="1"/></svg>
 <!-- row 3 -->
 <svg style="left:83.5px;top:111px" width="14" height="15" viewBox="0 0 14 15"><path d="M5.5 .8h3L13.3 14.2h-3l-1-3H4.7l-1 3H.7z M5.6 8.6h2.8L7 4.3z" fill="#fff" fill-rule="evenodd" stroke="#3f7cc4" stroke-width="1.1" stroke-linejoin="round"/></svg>
 <svg style="left:102px;top:117px" width="6" height="4"><path d="M0 0h6L3 3z" fill="#666"/></svg>
 <svg style="left:114px;top:110px" width="17" height="16" viewBox="0 0 17 16"><text x="0" y="8" font-size="8.5" fill="#555" font-family="Liberation Sans">ab</text><path d="M7 10l7-8.5 1.5 1.3-7 8.5z" fill="#777"/><rect x="0" y="12" width="16" height="3.5" fill="#ffff00"/></svg>
 <svg style="left:136px;top:117px" width="6" height="4"><path d="M0 0h6L3 3z" fill="#666"/></svg>
 <svg style="left:149px;top:110px" width="17" height="16" viewBox="0 0 17 16"><path d="M2.5 11L7.8 0.8h1.4L14.5 11M5 7h7" fill="none" stroke="#555" stroke-width="1.5"/><rect x="0" y="12.3" width="16" height="3.2" fill="#1a67c6"/></svg>
 <svg style="left:170px;top:117px" width="6" height="4"><path d="M0 0h6L3 3z" fill="#666"/></svg>
 <div class="t" style="left:183px;top:112px;font-size:12.6px;color:#555">Aa</div>
 <svg style="left:202.5px;top:117px" width="6" height="4"><path d="M0 0h6L3 3z" fill="#666"/></svg>
 <div class="a sep" style="left:217px;top:108px;height:21px"></div>
 <div class="t" style="left:228px;top:112px;font-size:13px;color:#555">A</div>
 <svg style="left:237px;top:110px" width="6" height="4"><path d="M0 3.5h6L3 0z" fill="#2b6cb3"/></svg>
 <div class="t" style="left:251px;top:115px;font-size:10.5px;color:#555">A</div>
 <svg style="left:258px;top:110px" width="6" height="4"><path d="M0 0h6L3 3.5z" fill="#2b6cb3"/></svg>
 <div class="t" style="left:153px;top:137px;font-size:11.2px;color:#444">Font</div>
 <svg style="left:259.5px;top:139.5px" width="7" height="7" viewBox="0 0 7 7"><path d="M.5 6.5V.5h6" fill="none" stroke="#777" stroke-width=".9"/><path d="M2.5 2.5l4 4M6.5 3.5v3h-3" fill="none" stroke="#777" stroke-width=".9"/></svg>
 <div class="a sep" style="left:270px;top:62px;height:83px"></div>
 <!-- ===== Paragraph ===== -->
 <svg style="left:279px;top:64px" width="14" height="15" viewBox="0 0 14 15"><circle cx="1.5" cy="1.5" r="1.4" fill="#2b6cb3"/><circle cx="1.5" cy="7.5" r="1.4" fill="#2b6cb3"/><circle cx="1.5" cy="13.5" r="1.4" fill="#2b6cb3"/><path d="M5 1.5h8M5 7.5h8M5 13.5h8" stroke="#666" stroke-width="1.1"/></svg>
 <svg style="left:299.5px;top:71px" width="6" height="4"><path d="M0 0h6L3 3z" fill="#666"/></svg>
 <svg style="left:312.5px;top:64px" width="15" height="15" viewBox="0 0 15 15"><text x="0" y="4.5" font-size="5" fill="#2b6cb3" font-family="Liberation Sans" font-weight="bold">1</text><text x="0" y="10" font-size="5" fill="#2b6cb3" font-family="Liberation Sans" font-weight="bold">2</text><text x="0" y="15" font-size="5" fill="#2b6cb3" font-family="Liberation Sans" font-weight="bold">3</text><path d="M5 2h9M5 7.5h9M5 13h9" stroke="#666" stroke-width="1.1"/></svg>
 <svg style="left:333.5px;top:71px" width="6" height="4"><path d="M0 0h6L3 3z" fill="#666"/></svg>
 <svg style="left:345.5px;top:64px" width="17" height="15" viewBox="0 0 17 15"><text x="0" y="4.5" font-size="5" fill="#2b6cb3" font-family="Liberation Sans" font-weight="bold">1</text><text x="5" y="9.5" font-size="5" fill="#2b6cb3" font-family="Liberation Sans" font-weight="bold">a</text><text x="9" y="15" font-size="5" fill="#2b6cb3" font-family="Liberation Sans" font-weight="bold">i</text><path d="M5 2h9M9.5 7h5M12 12.5h3" stroke="#666" stroke-width="1.1"/></svg>
 <svg style="left:365.5px;top:71px" width="6" height="4"><path d="M0 0h6L3 3z" fill="#666"/></svg>
 <div class="a sep" style="left:380px;top:62px;height:22px"></div>
 <svg style="left:387.5px;top:65px" width="17" height="14" viewBox="0 0 17 14"><path d="M0 .6h16M7 4.6h9M7 8.6h9M0 12.6h16" stroke="#666" stroke-width="1.1"/><path d="M1 6.6h5M3.5 4l-2.5 2.6 2.5 2.6" fill="none" stroke="#2b6cb3" stroke-width="1.6"/></svg>
 <svg style="left:409.5px;top:65px" width="17" height="14" viewBox="0 0 17 14"><path d="M0 .6h16M7 4.6h9M7 8.6h9M0 12.6h16" stroke="#666" stroke-width="1.1"/><path d="M0 6.6h5M2.5 4l2.5 2.6-2.5 2.6" fill="none" stroke="#2b6cb3" stroke-width="1.6"/></svg>
 <!-- row2 -->
 <svg style="left:279px;top:89.5px" width="14" height="11" viewBox="0 0 14 11"><path d="M0 .6h14M0 3.6h10M0 6.6h14M0 9.6h10" stroke="#666" stroke-width="1.1"/></svg>
 <svg style="left:301px;top:89.5px" width="14" height="11" viewBox="0 0 14 11"><path d="M0 .6h14M2 3.6h10M0 6.6h14M2 9.6h10" stroke="#666" stroke-width="1.1"/></svg>
 <svg style="left:323px;top:89.5px" width="14" height="11" viewBox="0 0 14 11"><path d="M0 .6h14M4 3.6h10M0 6.6h14M4 9.6h10" stroke="#666" stroke-width="1.1"/></svg>
 <div class="a" style="left:341px;top:84px;width:22px;height:22.6px;background:#c5c5c5"></div>
 <svg style="left:345px;top:89.5px" width="14" height="11" viewBox="0 0 14 11"><path d="M0 .6h14M0 3.6h14M0 6.6h14M0 9.6h14" stroke="#555" stroke-width="1.1"/></svg>
 <div class="a sep" style="left:367.5px;top:85px;height:21px"></div>
 <svg style="left:376px;top:87px" width="15" height="16" viewBox="0 0 15 16"><path d="M2.5 1v14M0 3.5L2.5 1 5 3.5M0 12.5l2.5 2.5 2.5-2.5" fill="none" stroke="#2b6cb3" stroke-width="1.2"/><path d="M7 4h8M7 8h8M7 12h8" stroke="#666" stroke-width="1.1"/></svg>
 <svg style="left:395px;top:94px" width="6" height="4"><path d="M0 0h6L3 3z" fill="#666"/></svg>
 <!-- row3 -->
 <svg style="left:278px;top:109.5px" width="17" height="17" viewBox="0 0 17 17"><path d="M2 8l5-5 4 4-5 5z" fill="#fff" stroke="#666" stroke-width="1"/><path d="M7 1v4" stroke="#666" stroke-width="1"/><path d="M12 7c1.5 1.5 1.5 3 0 4" fill="none" stroke="#2b6cb3" stroke-width="1.8"/><rect x=".5" y="13" width="15" height="3.3" fill="#fff" stroke="#888" stroke-width="1"/></svg>
 <svg style="left:299.5px;top:116.5px" width="6" height="4"><path d="M0 0h6L3 3z" fill="#666"/></svg>
 <svg style="left:313px;top:111px" width="14" height="14" viewBox="0 0 14 14"><path d="M.5 .5h13M.5 4.5h13M.5 9h13M.5 .5v13M4.5 .5v13M9 .5v13M13.5 .5v13" stroke="#888" stroke-width="1" stroke-dasharray="1 1"/><path d="M0 13.4h14" stroke="#555" stroke-width="1.2"/></svg>
 <svg style="left:333.5px;top:116.5px" width="6" height="4"><path d="M0 0h6L3 3z" fill="#666"/></svg>
 <div class="a sep" style="left:347.5px;top:108px;height:21px"></div>
 <svg style="left:357px;top:110px" width="14" height="16" viewBox="0 0 14 16"><text x="0" y="7" font-size="7.5" fill="#2b6cb3" font-family="Liberation Sans">A</text><text x="0" y="15" font-size="7.5" fill="#8a4fb8" font-family="Liberation Sans">Z</text><path d="M10.5 1v13.5M8 11.5l2.5 3 2.5-3" fill="none" stroke="#555" stroke-width="1.1"/></svg>
 <div class="a sep" style="left:378.5px;top:108px;height:21px"></div>
 <div class="t" style="left:389px;top:111px;font-size:14px;font-weight:bold;color:#666;font-family:'Liberation Serif',serif">&#182;</div>
 <div class="t" style="left:317px;top:137px;font-size:11.2px;color:#444">Paragraph</div>
 <svg style="left:425px;top:139.5px" width="7" height="7" viewBox="0 0 7 7"><path d="M.5 6.5V.5h6" fill="none" stroke="#777" stroke-width=".9"/><path d="M2.5 2.5l4 4M6.5 3.5v3h-3" fill="none" stroke="#777" stroke-width=".9"/></svg>
 <div class="a sep" style="left:433px;top:62px;height:83px"></div>
 <!-- ===== Styles ===== -->
 <svg style="left:446px;top:66px" width="29" height="29" viewBox="0 0 29 29"><path d="M0.5 21L8 .5h4.5L19 17.5h-4.5l-1.3-4H7.2l-1.5 4.5z M8.5 9.5h3.5L10.3 4.5z" fill="#3d7cc9" fill-rule="evenodd"/><path d="M17 16l9-10 2 2-8 10z" fill="#777"/><path d="M12 24c1-4 4-6 6-5.5s2.5 3-1 5.5-7 4-8 4z" fill="#3d7cc9"/><circle cx="17" cy="21" r="1.6" fill="#fff"/></svg>
 <div class="t" style="left:443px;top:101px;font-size:11.2px;color:#333">Styles</div>
 <svg style="left:456px;top:120px" width="7" height="4"><path d="M0 0h7L3.5 3.5z" fill="#666"/></svg>
 <div class="t" style="left:437.5px;top:137px;font-size:11.2px;color:#444">Styles</div>
 <svg style="left:477px;top:139.5px" width="7" height="7" viewBox="0 0 7 7"><path d="M.5 6.5V.5h6" fill="none" stroke="#777" stroke-width=".9"/><path d="M2.5 2.5l4 4M6.5 3.5v3h-3" fill="none" stroke="#777" stroke-width=".9"/></svg>
 <div class="a sep" style="left:485.5px;top:62px;height:83px"></div>
 <!-- ===== Editing ===== -->
 <div class="a" style="left:492.4px;top:62.4px;width:29.3px;height:29.3px;background:#fafafa;border:1px solid #c6c6c6"></div>
 <svg style="left:500px;top:69px" width="14" height="14" viewBox="0 0 14 14"><circle cx="8.5" cy="5.5" r="3.7" fill="none" stroke="#3d7cc9" stroke-width="1.8"/><path d="M6 8l-4.5 4.5" stroke="#3d7cc9" stroke-width="2.2" stroke-linecap="round"/></svg>
 <div class="t" style="left:488.5px;top:99px;font-size:11.6px;color:#333">Editing</div>
 <svg style="left:503.5px;top:118px" width="7" height="4"><path d="M0 0h7L3.5 3.5z" fill="#666"/></svg>
 <div class="a sep" style="left:529.5px;top:62px;height:83px"></div>
 <svg style="left:699px;top:139px" width="9" height="6" viewBox="0 0 9 6"><path d="M.8 5l3.7-3.7L8.2 5" fill="none" stroke="#666" stroke-width="1.3"/></svg>
<!-- ===== ruler zone ===== -->
 <div class="a" style="left:2px;top:151px;width:20.7px;height:20.7px;background:#d9d9d9"></div>
 <div class="a" style="left:4.6px;top:155px;width:14.4px;height:13px;background:#fff"></div>
 <svg style="left:8px;top:158px" width="7" height="7"><path d="M1 0v6h6" fill="none" stroke="#555" stroke-width="2"/></svg>
 <div class="a" style="left:24px;top:156.2px;width:659px;height:9.8px;background:#fff"></div>
 <div class="a" style="left:24px;top:156.2px;width:18px;height:9.8px;background:#c8c8c8"></div>
 <div class="a" style="left:683px;top:156.2px;width:17px;height:9.8px;background:#c8c8c8"></div>
 <svg style="left:34px;top:157px" width="7" height="8"><path d="M1.5 0v8M3.5 0v8M5.5 0v8M0 1.5h7M0 3.5h7M0 5.5h7" stroke="#888" stroke-width="1"/></svg>
 <svg style="left:39px;top:153px" width="10" height="22" viewBox="0 0 10 22"><path d="M.5.5h8.5v2L4.8 8 .5 2.5z" fill="#fff" stroke="#888" stroke-width="1"/><path d="M.5 13.5h8.5v-2L4.8 6.5.5 11.5z" fill="#fff" stroke="#888" stroke-width="1"/><rect x=".5" y="14" width="8.5" height="7.3" fill="#fff" stroke="#888" stroke-width="1"/></svg>
 <svg style="left:443px;top:157px" width="9" height="8"><path d="M1.5 0v8M3.5 0v8M5.5 0v8M7.5 0v8M0 1.5h9M0 3.5h9M0 5.5h9" stroke="#888" stroke-width="1"/></svg>
 <div class="a" style="left:441px;top:156.2px;width:13px;height:9.8px;background:rgba(200,200,200,.6)"></div>
 <svg style="left:438px;top:161px" width="9" height="7"><path d="M.5 6.5h8L4.5 .7z" fill="#fff" stroke="#888" stroke-width="1"/></svg>
 <svg style="left:685px;top:157px" width="9" height="8"><path d="M1.5 0v8M3.5 0v8M5.5 0v8M7.5 0v8M0 1.5h9M0 3.5h9M0 5.5h9" stroke="#888" stroke-width="1"/></svg>
<div class="a" style="left:54.0px;top:161.5px;width:1px;height:1.3px;background:#555"></div>
<div class="a" style="left:65.5px;top:161.5px;width:1px;height:1.3px;background:#555"></div>
<div class="a" style="left:77.0px;top:161.5px;width:1px;height:1.3px;background:#555"></div>
<div class="a" style="left:88.5px;top:159.5px;width:1px;height:5px;background:#555"></div>
<div class="a" style="left:100.0px;top:161.5px;width:1px;height:1.3px;background:#555"></div>
<div class="a" style="left:111.5px;top:161.5px;width:1px;height:1.3px;background:#555"></div>
<div class="a" style="left:123.0px;top:161.5px;width:1px;height:1.3px;background:#555"></div>
<div class="a" style="left:146.0px;top:161.5px;width:1px;height:1.3px;background:#555"></div>
<div class="a" style="left:157.5px;top:161.5px;width:1px;height:1.3px;background:#555"></div>
<div class="a" style="left:169.0px;top:161.5px;width:1px;height:1.3px;background:#555"></div>
<div class="a" style="left:180.5px;top:159.5px;width:1px;height:5px;background:#555"></div>
<div class="a" style="left:192.0px;top:161.5px;width:1px;height:1.3px;background:#555"></div>
<div class="a" style="left:203.5px;top:161.5px;width:1px;height:1.3px;background:#555"></div>
<div class="a" style="left:215.0px;top:161.5px;width:1px;height:1.3px;background:#555"></div>
<div class="a" style="left:238.0px;top:161.5px;width:1px;height:1.3px;background:#555"></div>
<div class="a" style="left:249.5px;top:161.5px;width:1px;height:1.3px;background:#555"></div>
<div class="a" style="left:261.0px;top:161.5px;width:1px;height:1.3px;background:#555"></div>
<div class="a" style="left:272.5px;top:159.5px;width:1px;height:5px;background:#555"></div>
<div class="a" style="left:284.0px;top:161.5px;width:1px;height:1.3px;background:#555"></div>
<div class="a" style="left:295.5px;top:161.5px;width:1px;height:1.3px;background:#555"></div>
<div class="a" style="left:307.0px;top:161.5px;width:1px;height:1.3px;background:#555"></div>
<div class="a" style="left:330.0px;top:161.5px;width:1px;height:1.3px;background:#555"></div>
<div class="a" style="left:341.5px;top:161.5px;width:1px;height:1.3px;background:#555"></div>
<div class="a" style="left:353.0px;top:161.5px;width:1px;height:1.3px;background:#555"></div>
<div class="a" style="left:364.5px;top:159.5px;width:1px;height:5px;background:#555"></div>
<div class="a" style="left:376.0px;top:161.5px;width:1px;height:1.3px;background:#555"></div>
<div class="a" style="left:387.5px;top:161.5px;width:1px;height:1.3px;background:#555"></div>
<div class="a" style="left:399.0px;top:161.5px;width:1px;height:1.3px;background:#555"></div>
<div class="a" style="left:422.0px;top:161.5px;width:1px;height:1.3px;background:#555"></div>
<div class="a" style="left:433.5px;top:161.5px;width:1px;height:1.3px;background:#555"></div>
<div class="a" style="left:445.0px;top:161.5px;width:1px;height:1.3px;background:#555"></div>
<div class="a" style="left:456.5px;top:159.5px;width:1px;height:5px;background:#555"></div>
<div class="a" style="left:468.0px;top:161.5px;width:1px;height:1.3px;background:#555"></div>
<div class="a" style="left:479.5px;top:161.5px;width:1px;height:1.3px;background:#555"></div>
<div class="a" style="left:491.0px;top:161.5px;width:1px;height:1.3px;background:#555"></div>
<div class="a" style="left:514.0px;top:161.5px;width:1px;height:1.3px;background:#555"></div>
<div class="a" style="left:525.5px;top:161.5px;width:1px;height:1.3px;background:#555"></div>
<div class="a" style="left:537.0px;top:161.5px;width:1px;height:1.3px;background:#555"></div>
<div class="a" style="left:548.5px;top:159.5px;width:1px;height:5px;background:#555"></div>
<div class="a" style="left:560.0px;top:161.5px;width:1px;height:1.3px;background:#555"></div>
<div class="a" style="left:571.5px;top:161.5px;width:1px;height:1.3px;background:#555"></div>
<div class="a" style="left:583.0px;top:161.5px;width:1px;height:1.3px;background:#555"></div>
<div class="a" style="left:606.0px;top:161.5px;width:1px;height:1.3px;background:#555"></div>
<div class="a" style="left:617.5px;top:161.5px;width:1px;height:1.3px;background:#555"></div>
<div class="a" style="left:629.0px;top:161.5px;width:1px;height:1.3px;background:#555"></div>
<div class="a" style="left:640.5px;top:159.5px;width:1px;height:5px;background:#555"></div>
<div class="a" style="left:652.0px;top:161.5px;width:1px;height:1.3px;background:#555"></div>
<div class="a" style="left:663.5px;top:161.5px;width:1px;height:1.3px;background:#555"></div>
<div class="a" style="left:675.0px;top:161.5px;width:1px;height:1.3px;background:#555"></div>
<div class="t" style="left:132.0px;top:157.5px;font-size:9.6px;color:#444">1</div>
<div class="t" style="left:224.0px;top:157.5px;font-size:9.6px;color:#444">2</div>
<div class="t" style="left:316.0px;top:157.5px;font-size:9.6px;color:#444">3</div>
<div class="t" style="left:408.0px;top:157.5px;font-size:9.6px;color:#444">4</div>
<div class="t" style="left:500.0px;top:157.5px;font-size:9.6px;color:#444">5</div>
<div class="t" style="left:592.0px;top:157.5px;font-size:9.6px;color:#444">6</div>
 <!-- v ruler -->
 <div class="a" style="left:6px;top:175px;width:11px;height:499px;background:#fff"></div>
 <div class="a" style="left:6px;top:220px;width:11px;height:7px;background:#c8c8c8"></div>
<div class="a" style="left:11.2px;top:177.5px;width:2.5px;height:1px;background:#555"></div>
<div class="a" style="left:11.2px;top:189.0px;width:2.5px;height:1px;background:#555"></div>
<div class="t" style="left:6px;top:196.5px;width:12px;text-align:center;font-size:10px;color:#444;transform:rotate(-90deg)">5</div>
<div class="a" style="left:11.2px;top:212.0px;width:2.5px;height:1px;background:#555"></div>

<div class="a" style="left:11.2px;top:235.0px;width:2.5px;height:1px;background:#555"></div>
<div class="a" style="left:9.5px;top:246.5px;width:5px;height:1px;background:#555"></div>
<div class="a" style="left:11.2px;top:258.0px;width:2.5px;height:1px;background:#555"></div>
<div class="a" style="left:11.2px;top:269.5px;width:2.5px;height:1px;background:#555"></div>
<div class="a" style="left:11.2px;top:281.0px;width:2.5px;height:1px;background:#555"></div>
<div class="t" style="left:6px;top:288.5px;width:12px;text-align:center;font-size:10px;color:#444;transform:rotate(-90deg)">6</div>
<div class="a" style="left:11.2px;top:304.0px;width:2.5px;height:1px;background:#555"></div>
<div class="a" style="left:11.2px;top:315.5px;width:2.5px;height:1px;background:#555"></div>
<div class="a" style="left:11.2px;top:327.0px;width:2.5px;height:1px;background:#555"></div>
<div class="a" style="left:9.5px;top:338.5px;width:5px;height:1px;background:#555"></div>
<div class="a" style="left:11.2px;top:350.0px;width:2.5px;height:1px;background:#555"></div>
<div class="a" style="left:11.2px;top:361.5px;width:2.5px;height:1px;background:#555"></div>
<div class="a" style="left:11.2px;top:373.0px;width:2.5px;height:1px;background:#555"></div>
<div class="t" style="left:6px;top:380.5px;width:12px;text-align:center;font-size:10px;color:#444;transform:rotate(-90deg)">7</div>
<div class="a" style="left:11.2px;top:396.0px;width:2.5px;height:1px;background:#555"></div>
<div class="a" style="left:11.2px;top:407.5px;width:2.5px;height:1px;background:#555"></div>
<div class="a" style="left:11.2px;top:419.0px;width:2.5px;height:1px;background:#555"></div>
<div class="a" style="left:9.5px;top:430.5px;width:5px;height:1px;background:#555"></div>
<div class="a" style="left:11.2px;top:442.0px;width:2.5px;height:1px;background:#555"></div>
<div class="a" style="left:11.2px;top:453.5px;width:2.5px;height:1px;background:#555"></div>
<div class="a" style="left:11.2px;top:465.0px;width:2.5px;height:1px;background:#555"></div>
<div class="t" style="left:6px;top:472.5px;width:12px;text-align:center;font-size:10px;color:#444;transform:rotate(-90deg)">8</div>
<div class="a" style="left:11.2px;top:488.0px;width:2.5px;height:1px;background:#555"></div>
<div class="a" style="left:11.2px;top:499.5px;width:2.5px;height:1px;background:#555"></div>
<div class="a" style="left:11.2px;top:511.0px;width:2.5px;height:1px;background:#555"></div>
<div class="a" style="left:9.5px;top:522.5px;width:5px;height:1px;background:#555"></div>
<div class="a" style="left:11.2px;top:534.0px;width:2.5px;height:1px;background:#555"></div>
<div class="a" style="left:11.2px;top:545.5px;width:2.5px;height:1px;background:#555"></div>
<div class="a" style="left:11.2px;top:557.0px;width:2.5px;height:1px;background:#555"></div>
<div class="t" style="left:6px;top:564.5px;width:12px;text-align:center;font-size:10px;color:#444;transform:rotate(-90deg)">9</div>
<div class="a" style="left:11.2px;top:580.0px;width:2.5px;height:1px;background:#555"></div>
<div class="a" style="left:11.2px;top:591.5px;width:2.5px;height:1px;background:#555"></div>
<div class="a" style="left:11.2px;top:603.0px;width:2.5px;height:1px;background:#555"></div>
<div class="a" style="left:9.5px;top:614.5px;width:5px;height:1px;background:#555"></div>
<div class="a" style="left:11.2px;top:626.0px;width:2.5px;height:1px;background:#555"></div>
<div class="a" style="left:11.2px;top:637.5px;width:2.5px;height:1px;background:#555"></div>
<div class="a" style="left:11.2px;top:649.0px;width:2.5px;height:1px;background:#555"></div>
<div class="t" style="left:6px;top:656.5px;width:12px;text-align:center;font-size:10px;color:#444;transform:rotate(-90deg)">10</div>
<div class="a" style="left:11.2px;top:672.0px;width:2.5px;height:1px;background:#555"></div>
 <!-- page -->
 <div class="a" style="left:25px;top:175px;width:676px;height:499px;background:#fff;overflow:hidden">
<div class="doc a" style="left:24.7px;top:-11.1px;line-height:19.14px;white-space:nowrap"><b>d) Tổ chức thực hiện:</b></div>
<div class="a" style="left:0;top:0;width:10px;height:8px;background:#fff;border-right:1px solid #bbb;border-bottom:1px solid #bbb"></div>
<svg style="left:1px;top:-1px" width="9" height="9" viewBox="0 0 9 9"><path d="M4.5 0v9M0 4.5h9M3 1.5l1.5-1.5 1.5 1.5M3 7.5l1.5 1.5 1.5-1.5M1.5 3L0 4.5 1.5 6M7.5 3L9 4.5 7.5 6" fill="none" stroke="#444" stroke-width="1"/></svg>
<div class="a" style="left:10px;top:8px;width:659px;height:1px;background:#000"></div>
<div class="a" style="left:10px;top:47px;width:659px;height:1px;background:#000"></div>
<div class="a" style="left:10px;top:8px;width:1px;height:500px;background:#000"></div>
<div class="a" style="left:424px;top:8px;width:1px;height:500px;background:#000"></div>
<div class="a" style="left:668px;top:8px;width:1px;height:500px;background:#000"></div>
<div class="doc a" style="left:11px;top:18.83px;width:413px;text-align:center;line-height:19.14px"><b>Sản phẩm dự kiến</b></div>
<div class="doc a" style="left:425px;top:8.83px;width:243px;text-align:center;line-height:19.14px"><b>Hoạt động của giáo viên và học<br>sinh</b></div>
<div class="doc a" style="left:18.6px;top:47.83px;line-height:19.14px;white-space:nowrap"><b>2. ĐỊNH DẠNG VĂN BẢN</b></div>
<div class="doc a" style="left:18.6px;top:66.97px;line-height:19.14px;white-space:nowrap">-</div>
<div class="doc a" style="left:18.6px;top:86.11px;line-height:19.14px;white-space:nowrap"><b>Ghi nhớ:</b></div>
<div class="doc a" style="left:18.6px;top:105.25px;line-height:19.14px;white-space:nowrap">-</div>
<div class="doc a" style="left:18.6px;top:124.39px;line-height:19.14px;white-space:nowrap">.</div>
<div class="doc a" style="left:18.6px;top:143.53px;line-height:19.14px;white-space:nowrap"><b>Vận dụng</b></div>
<div class="doc a" style="left:432.4px;top:47.83px;line-height:19.14px;white-space:nowrap"><b>* Bước 1: Chuyển giao nhiệm</b></div>
<div class="doc a" style="left:432.4px;top:66.97px;line-height:19.14px;white-space:nowrap"><b>vụ:</b></div>
<div class="doc a" style="left:432.4px;top:105.25px;line-height:19.14px;white-space:nowrap"><b>GV:</b> tổ chức HĐ2</div>
<div class="doc a" style="left:432.4px;top:124.39px;line-height:19.14px;white-space:nowrap;word-spacing:-0.213px">1. Sau khi tạo văn bản cho một bài</div>
<div class="doc a" style="left:432.4px;top:143.53px;line-height:19.14px;white-space:nowrap;word-spacing:1.363px">trình chiếu, em thường định dạng</div>
<div class="doc a" style="left:432.4px;top:162.67px;line-height:19.14px;white-space:nowrap;word-spacing:1.375px">văn bản như thế nào? Cần làm gì</div>
<div class="doc a" style="left:432.4px;top:181.81px;line-height:19.14px;white-space:nowrap;word-spacing:2.103px">để nhấn mạng nội dung trên một</div>
<div class="doc a" style="left:432.4px;top:200.95px;line-height:19.14px;white-space:nowrap">trang?</div>
<div class="doc a" style="left:432.4px;top:220.09px;line-height:19.14px;white-space:nowrap;word-spacing:3.988px">2. Có nên viết nhiều chữ, dùng</div>
<div class="doc a" style="left:432.4px;top:239.23px;line-height:19.14px;white-space:nowrap;word-spacing:1.509px">nhiều màu trên một trang không?</div>
<div class="doc a" style="left:432.4px;top:258.37px;line-height:19.14px;white-space:nowrap">Vì sao?</div>
<div class="doc a" style="left:432.4px;top:315.79px;line-height:19.14px;white-space:nowrap"><b>HS:</b> Thảo luận, trả lời</div>
<div class="doc a" style="left:432.4px;top:334.93px;line-height:19.14px;white-space:nowrap"><b>HS:</b> Lấy các ví dụ trong thực tế.</div>
<div class="doc a" style="left:432.4px;top:373.21px;line-height:19.14px;white-space:nowrap"><b>* Bước 2: Thực hiện nhiệm vụ:</b></div>
<div class="doc a" style="left:432.4px;top:411.49px;line-height:19.14px;white-space:nowrap">+ HS: Suy nghĩ, tham khảo sgk</div>
<div class="doc a" style="left:432.4px;top:430.63px;line-height:19.14px;white-space:nowrap">trả lời câu hỏi</div>
<div class="doc a" style="left:432.4px;top:449.77px;line-height:19.14px;white-space:nowrap">+ GV: quan sát và trợ giúp các</div>
<div class="doc a" style="left:432.4px;top:468.91px;line-height:19.14px;white-space:nowrap">cặp.</div>
<div class="a" style="left:19.3px;top:163px;width:1px;height:18px;background:#000"></div>
 </div>
 <!-- v scrollbar -->
 <div class="a" style="left:702px;top:168px;width:15.5px;height:506px;background:#dadada"></div>
 <div class="a" style="left:702px;top:153px;width:15px;height:15px;background:#fff;border:1px solid #c6c6c6"></div>
 <svg style="left:706px;top:158px" width="8" height="5"><path d="M0 4.5h8L4 0z" fill="#777"/></svg>
 <div class="a" style="left:702.7px;top:533px;width:13.7px;height:15.8px;background:#fff;border:1px solid #c6c6c6"></div>
 <div class="a" style="left:702px;top:658.3px;width:15px;height:13.6px;background:#fff;border:1px solid #c6c6c6"></div>
 <svg style="left:706px;top:663px" width="8" height="5"><path d="M0 0h8L4 4.5z" fill="#777"/></svg>
 <!-- h scrollbar -->
 <div class="a" style="left:0;top:674px;width:719px;height:17px;background:#e6e6e6"></div>
 <div class="a" style="left:3.5px;top:675.5px;width:14px;height:14px;background:#fff;border:1px solid #c6c6c6"></div>
 <svg style="left:8px;top:679px" width="5" height="8"><path d="M4.5 0v8L0 4z" fill="#777"/></svg>
 <div class="a" style="left:17.5px;top:675.5px;width:74px;height:14px;background:#d9d9d9"></div>
 <div class="a" style="left:91.5px;top:675.5px;width:562px;height:14px;background:#fff;border:1px solid #c6c6c6"></div>
 <div class="a" style="left:653.5px;top:675.5px;width:31px;height:14px;background:#d9d9d9"></div>
 <div class="a" style="left:684.3px;top:675.5px;width:14px;height:14px;background:#fff;border:1px solid #c6c6c6"></div>
 <svg style="left:689px;top:679px" width="5" height="8"><path d="M0 0v8L4.5 4z" fill="#777"/></svg>
 <!-- status bar -->
 <div class="a" style="left:0;top:690.5px;width:719px;height:1px;background:#d0d0d0"></div>
 <div class="a" style="left:0;top:691.5px;width:719px;height:22px;background:#f1f1f1"></div>
 <div class="t" style="left:8px;top:696.5px;font-size:11.1px;color:#444">Page 52 of 67</div>
 <div class="t" style="left:96px;top:696.5px;font-size:11.1px;color:#444">28263 words</div>
 <div class="t" style="left:180px;top:696.5px;font-size:11.1px;color:#444">English (United States)</div>
 <svg style="left:426px;top:696px" width="14" height="13" viewBox="0 0 14 13"><path d="M.5 1.5h5.5l1 1 1-1h5.5v10H8l-1 1-1-1H.5z" fill="none" stroke="#777" stroke-width="1"/><path d="M7 2.5v9M2 4h3.5M2 6h3.5M2 8h3.5M8.5 4H12M8.5 6H12M8.5 8H12" stroke="#777" stroke-width=".9"/></svg>
 <div class="a" style="left:453.4px;top:691.5px;width:37.6px;height:21.5px;background:#c8c8c8"></div>
 <svg style="left:464px;top:696px" width="15" height="12" viewBox="0 0 15 12"><rect x=".5" y=".5" width="14" height="11" fill="none" stroke="#666" stroke-width="1"/><path d="M3 3h9M3 5h9M3 7h9M3 9h9" stroke="#666" stroke-width=".9"/></svg>
 <svg style="left:503.3px;top:696px" width="14" height="14" viewBox="0 0 14 14"><path d="M.5.5h10v6M.5.5v11h5" fill="none" stroke="#777" stroke-width="1"/><path d="M2.5 3h6M2.5 5h6M2.5 7h3M2.5 9h3" stroke="#777" stroke-width=".9"/><circle cx="10" cy="10" r="3.3" fill="none" stroke="#777" stroke-width="1"/><path d="M7 10h6M10 7c-1.5 2-1.5 4 0 6M10 7c1.5 2 1.5 4 0 6" stroke="#777" stroke-width=".8" fill="none"/></svg>
 <div class="a" style="left:534.4px;top:701px;width:6px;height:1.6px;background:#555"></div>
 <div class="a" style="left:544.3px;top:701.3px;width:99px;height:1px;background:#b0b0b0"></div>
 <div class="a" style="left:591px;top:695px;width:4px;height:13px;background:#555"></div>
 <div class="a" style="left:648px;top:701px;width:8px;height:1.6px;background:#555"></div>
 <div class="a" style="left:651.2px;top:698px;width:1.6px;height:8px;background:#555"></div>
 <div class="t" style="left:670.6px;top:696.5px;font-size:11.1px;color:#444">96%</div>
 <!-- border overlay -->
 <div class="a" style="left:0;top:0;width:719px;height:713px;border:1px solid #2b579a;pointer-events:none"></div>
</div>

<!-- ============ TASKBAR ============ -->
<div id="task" class="a">
 <!-- start -->
 <svg style="left:15.5px;top:11.5px" width="17" height="17" viewBox="0 0 17 17"><path d="M0 2.3L7 1.3v6.4H0z M8 1.1L17 0v7.7H8z M0 8.7h7v6.9L0 14.7z M8 8.7h9V17l-9-1.2z" fill="#000"/></svg>
 <svg style="left:64px;top:12.0px" width="17" height="17" viewBox="0 0 17 17"><circle cx="10.5" cy="6.3" r="5.3" fill="none" stroke="#000" stroke-width="1.3"/><path d="M6.8 10L.8 16" stroke="#000" stroke-width="1.5"/></svg>
 <!-- explorer -->
 <svg style="left:112px;top:10.5px" width="22" height="19" viewBox="0 0 22 19"><path d="M0 1.5A1.5 1.5 0 0 1 1.5 0H8l2 2H20a1.5 1.5 0 0 1 1.5 1.5V4H0z" fill="#e8a318"/><path d="M0 3.5h21.5V17a1 1 0 0 1-1 1H1a1 1 0 0 1-1-1z" fill="#fcd361"/><path d="M5 18v-7a1 1 0 0 1 1-1h10a1 1 0 0 1 1 1v7h-3.5v-4.5h-5V18z" fill="#3a8ee6"/></svg>
 <!-- store -->
 <svg style="left:160px;top:8.5px" width="24" height="24" viewBox="0 0 24 24"><path d="M7.5 5V2.5A1.5 1.5 0 0 1 9 1h6a1.5 1.5 0 0 1 1.5 1.5V5" fill="none" stroke="#3ab5f3" stroke-width="1.5"/><rect x="0.5" y="4.5" width="23" height="19" rx="2.5" fill="#1f4e96"/><rect x="7.5" y="9" width="4" height="4" fill="#f35325"/><rect x="12.5" y="9" width="4" height="4" fill="#81bc06"/><rect x="7.5" y="14" width="4" height="4" fill="#05a6f0"/><rect x="12.5" y="14" width="4" height="4" fill="#ffba08"/></svg>
 <!-- paint -->
 <svg style="left:208.5px;top:8.5px" width="25" height="23" viewBox="0 0 25 23"><path d="M12 5C5 5 0 9 0 13.5 0 17 3 19 6 18s4 1 5 2.5c1.5 2 5 2 8.5 0S24 14 23 10 19 5 12 5z" fill="#dfe8f0" stroke="#9bb2c8" stroke-width=".8"/><circle cx="4.5" cy="13" r="2" fill="#e84d4d"/><circle cx="8" cy="9" r="2" fill="#7cc04b"/><circle cx="13" cy="8" r="2" fill="#f2c230"/><circle cx="11" cy="15" r="1.8" fill="#fff" stroke="#9bb2c8" stroke-width=".6"/><path d="M12 22L22 3" stroke="#e07a22" stroke-width="2"/><path d="M21 4l2-3.5 1.5 1z" fill="#d8a36a"/></svg>
 <!-- snip -->
 <svg style="left:257.5px;top:8.5px" width="25" height="23" viewBox="0 0 25 23"><ellipse cx="11.5" cy="11" rx="11" ry="7.5" transform="rotate(-20 11.5 11)" fill="#fff" fill-opacity=".5" stroke="#e43b3b" stroke-width="1.4"/><path d="M10 3l6 13M17 3l-6 13" stroke="#777" stroke-width="1.2"/><circle cx="12" cy="19" r="2.6" fill="none" stroke="#1d8be0" stroke-width="1.6"/><circle cx="19" cy="17.5" r="2.6" fill="none" stroke="#1d8be0" stroke-width="1.6"/></svg>
 <!-- chrome -->
 <svg style="left:307.5px;top:8.5px" width="23" height="23" viewBox="0 0 23 23"><circle cx="11.5" cy="11.5" r="11.3" fill="#2da94f"/><path d="M11.5 11.5L1.7 5.8A11.3 11.3 0 0 1 21.3 5.8z" fill="#e94235"/><path d="M11.5 11.5l9.8-5.7A11.3 11.3 0 0 1 11.5 22.8z" fill="#fcc934"/><path d="M1.7 5.8L6.6 14.3 11.5 22.8A11.3 11.3 0 0 1 1.7 5.8z" fill="#2da94f"/><circle cx="11.5" cy="11.5" r="5.3" fill="#fff"/><circle cx="11.5" cy="11.5" r="4.2" fill="#1a73e8"/></svg>
 <!-- sticky -->
 <svg style="left:357px;top:9.0px" width="22" height="22" viewBox="0 0 22 22"><rect x="0" y="0" width="22" height="22" rx="1.5" fill="#333"/><path d="M11 22L22 11V20.5A1.5 1.5 0 0 1 20.5 22z" fill="#ffd800"/></svg>
 <!-- foxit -->
 <svg style="left:404.5px;top:7.5px" width="25" height="25" viewBox="0 0 25 25"><path d="M0 0h19l6 6v19H0z" fill="#f39130"/><path d="M19 0v6h6z" fill="#fcc88e"/><path d="M12.5 4a6.5 6.5 0 1 0 6.2 8.5h-6v-3h9.3A9.6 9.6 0 1 1 19 5.5z" fill="#fff" transform="translate(2 1) scale(.85)"/><text x="6" y="23" font-size="6" font-weight="bold" fill="#fff" font-family="Liberation Sans">PDF</text></svg>
 <div class="a" style="left:397px;top:38px;width:40px;height:2px;background:#0a78d7"></div>
 <!-- word -->
 <div class="a" style="left:442px;top:0;width:48px;height:40px;background:#e5f0ee"></div>
 <svg style="left:454px;top:9.0px" width="24" height="22" viewBox="0 0 24 22"><rect x="9" y="2.5" width="14.5" height="17" fill="#fff" stroke="#2b579a" stroke-width="1"/><path d="M11.5 6h10M11.5 8.5h10M11.5 11h10M11.5 13.5h10M11.5 16h10" stroke="#2b579a" stroke-width="1"/><path d="M0 2.5L13 0v22L0 19.5z" fill="#2b579a"/><text x="2" y="15" font-size="9.5" font-weight="bold" fill="#fff" font-family="Liberation Sans">W</text></svg>
 <div class="a" style="left:442px;top:38px;width:48px;height:2px;background:#0a78d7"></div>
 <!-- tray -->
 <svg style="left:983px;top:14.0px" width="20" height="15" viewBox="0 0 20 15"><path d="M4 11a3.5 3.5 0 0 1 0-7 5 5 0 0 1 9.5-1.5A4 4 0 0 1 16.5 11z" fill="#9ccbee"/><path d="M6 4a4 4 0 0 1 7.5.5A3 3 0 0 1 18 8a3 3 0 0 1-2.5 3" fill="#c9e4f7"/><path d="M9 10.5l-1.3 2.2a1.3 1.3 0 1 0 2.6 0z" fill="#3a9ad9"/></svg>
 <div class="t tt" style="left:1013.5px;top:15.0px;font-size:12.3px">30°C</div>
 <div class="t tt" style="left:1051px;top:14.8px;font-size:13.4px">Mưa nhỏ</div>
 <svg style="left:1123px;top:17.0px" width="13" height="8" viewBox="0 0 13 8"><path d="M.7 7.3l5.8-5.8 5.8 5.8" fill="none" stroke="#000" stroke-width="1.2"/></svg>
 <svg style="left:1146px;top:16.0px" width="16" height="10" viewBox="0 0 16 10"><rect x=".6" y=".6" width="13" height="8.8" fill="none" stroke="#000" stroke-width="1.2"/><rect x="2.3" y="2.5" width="4" height="5" fill="#000"/><rect x="14" y="3" width="1.6" height="4" fill="#000"/></svg>
 <svg style="left:1172px;top:14.0px" width="14" height="14" viewBox="0 0 14 14"><path d="M1 13A12 12 0 0 1 13 1M3.5 13A9.5 9.5 0 0 1 13 3.5M6 13A7 7 0 0 1 13 6M8.5 13A4.5 4.5 0 0 1 13 8.5" fill="none" stroke="#000" stroke-width="1.1"/><circle cx="12" cy="12" r="1.6" fill="#000"/></svg>
 <svg style="left:1192.5px;top:14.0px" width="16" height="15" viewBox="0 0 16 15"><path d="M.6 5h3l4.4-4v13L3.6 10h-3z" fill="none" stroke="#000" stroke-width="1.1"/><path d="M10 5a3 3 0 0 1 0 5M12 3a6 6 0 0 1 0 9" fill="none" stroke="#000" stroke-width="1.1"/><path d="M14 1.5a8 8 0 0 1 0 12" fill="none" stroke="#999" stroke-width="1"/></svg>
 <div class="t tt" style="left:1219px;top:14.5px;font-size:11.2px">ENG</div>
 <div class="t tt" style="left:1257px;top:5.0px;font-size:11.7px">10:27 PM</div>
 <div class="t tt" style="left:1255.5px;top:22.0px;font-size:11.5px">5/28/2022</div>
 <svg style="left:1324px;top:12.0px" width="18" height="18" viewBox="0 0 18 18"><path d="M.6.6h16.8v12.5H10l-4 4v-4H.6z" fill="none" stroke="#000" stroke-width="1.1"/></svg>
</div>
</body></html>
